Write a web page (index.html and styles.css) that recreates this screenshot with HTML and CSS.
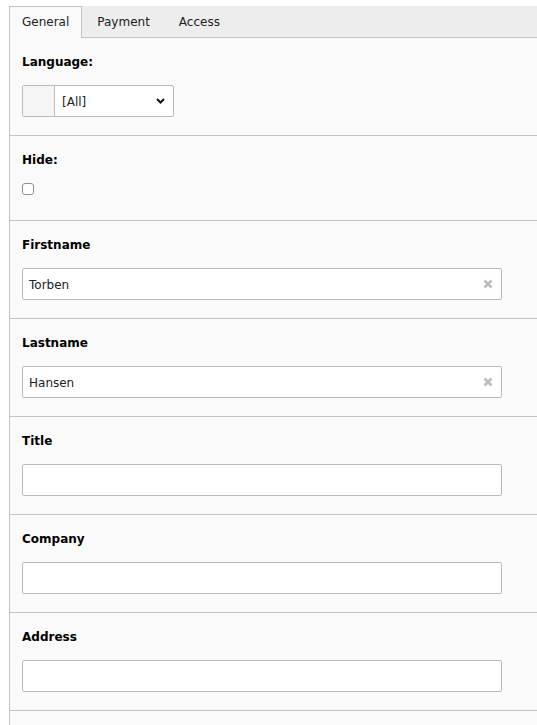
FILE: index.html
```html
<!DOCTYPE html>
<html>
<head>
<meta charset="utf-8">
<link rel="stylesheet" href="styles.css">
</head>
<body>
<div class="tabs">
  <div class="tab active">General</div>
  <div class="tab">Payment</div>
  <div class="tab">Access</div>
</div>
<div class="panel">
  <div class="section">
    <div class="label">Language:</div>
    <div class="select">
      <span class="addon"></span>
      <span class="select-value">[All]</span>
      <svg class="chev" width="9" height="6" viewBox="0 0 9 6"><path d="M1 1 L4.5 4.5 L8 1" fill="none" stroke="#111" stroke-width="2"/></svg>
    </div>
  </div>
  <div class="section">
    <div class="label">Hide:</div>
    <div class="check-row"><span class="checkbox"></span></div>
  </div>
  <div class="section">
    <div class="label">Firstname</div>
    <div class="input"><span class="value">Torben</span>
      <svg class="clear" width="10" height="10" viewBox="0 0 10 10"><path d="M1.5 1.5 L8.5 8.5 M8.5 1.5 L1.5 8.5" stroke="#bdbdbd" stroke-width="2.6"/></svg>
    </div>
  </div>
  <div class="section">
    <div class="label">Lastname</div>
    <div class="input"><span class="value">Hansen</span>
      <svg class="clear" width="10" height="10" viewBox="0 0 10 10"><path d="M1.5 1.5 L8.5 8.5 M8.5 1.5 L1.5 8.5" stroke="#bdbdbd" stroke-width="2.6"/></svg>
    </div>
  </div>
  <div class="section">
    <div class="label">Title</div>
    <div class="input"></div>
  </div>
  <div class="section">
    <div class="label">Company</div>
    <div class="input"></div>
  </div>
  <div class="section">
    <div class="label">Address</div>
    <div class="input"></div>
  </div>
  <div class="section tail"></div>
</div>
</body>
</html>
```
FILE: styles.css
```css
html, body {
  margin: 0;
  padding: 0;
  background: #fff;
  font-family: "DejaVu Sans", Verdana, sans-serif;
  font-size: 12px;
  color: #000;
}
.tabs {
  display: flex;
  margin: 6px 0 0 9px;
  height: 31px;
  background: #ededed;
  border-bottom: 1px solid #c3c3c3;
}
.tab {
  height: 31px;
  line-height: 31px;
  padding: 0 12px;
  border: 1px solid transparent;
  border-bottom: none;
  color: #212121;
  box-sizing: border-box;
}
.tab + .tab {
  padding: 0 13px 0 14px;
}
.tab.active {
  background: #fafafa;
  border-color: #c3c3c3;
  height: 32px;
  margin-bottom: -1px;
}
.panel {
  margin-left: 9px;
  border-left: 1px solid #c3c3c3;
  background: #fafafa;
}
.section {
  padding: 16px 12px 18px;
  border-bottom: 1px solid #c3c3c3;
}
.section.tail {
  height: 40px;
  padding: 0;
  border-bottom: none;
}
.label {
  font-weight: bold;
  line-height: 16px;
  margin-bottom: 15px;
  color: #000;
}
.select {
  display: flex;
  align-items: center;
  width: 152px;
  height: 32px;
  box-sizing: border-box;
  border: 1px solid #bbb;
  border-radius: 2px;
  background: #fff;
}
.addon {
  width: 31px;
  height: 100%;
  background: #f5f5f5;
  border-right: 1px solid #bbb;
}
.select-value {
  flex: 1;
  padding-left: 7px;
  padding-top: 1px;
  color: #212121;
}
.chev {
  margin-right: 8px;
}
.check-row {
  height: 19px;
}
.checkbox {
  display: block;
  margin-top: 5px;
  width: 12px;
  height: 12px;
  box-sizing: border-box;
  border: 1px solid #8f8f8f;
  border-radius: 3px;
  background: #fff;
}
.input {
  display: flex;
  align-items: center;
  justify-content: space-between;
  width: 480px;
  height: 32px;
  box-sizing: border-box;
  border: 1px solid #bbb;
  border-radius: 2px;
  background: #fff;
  padding: 1px 8px 0 6px;
  color: #212121;
}
.clear {
  margin-top: -1px;
}
```
